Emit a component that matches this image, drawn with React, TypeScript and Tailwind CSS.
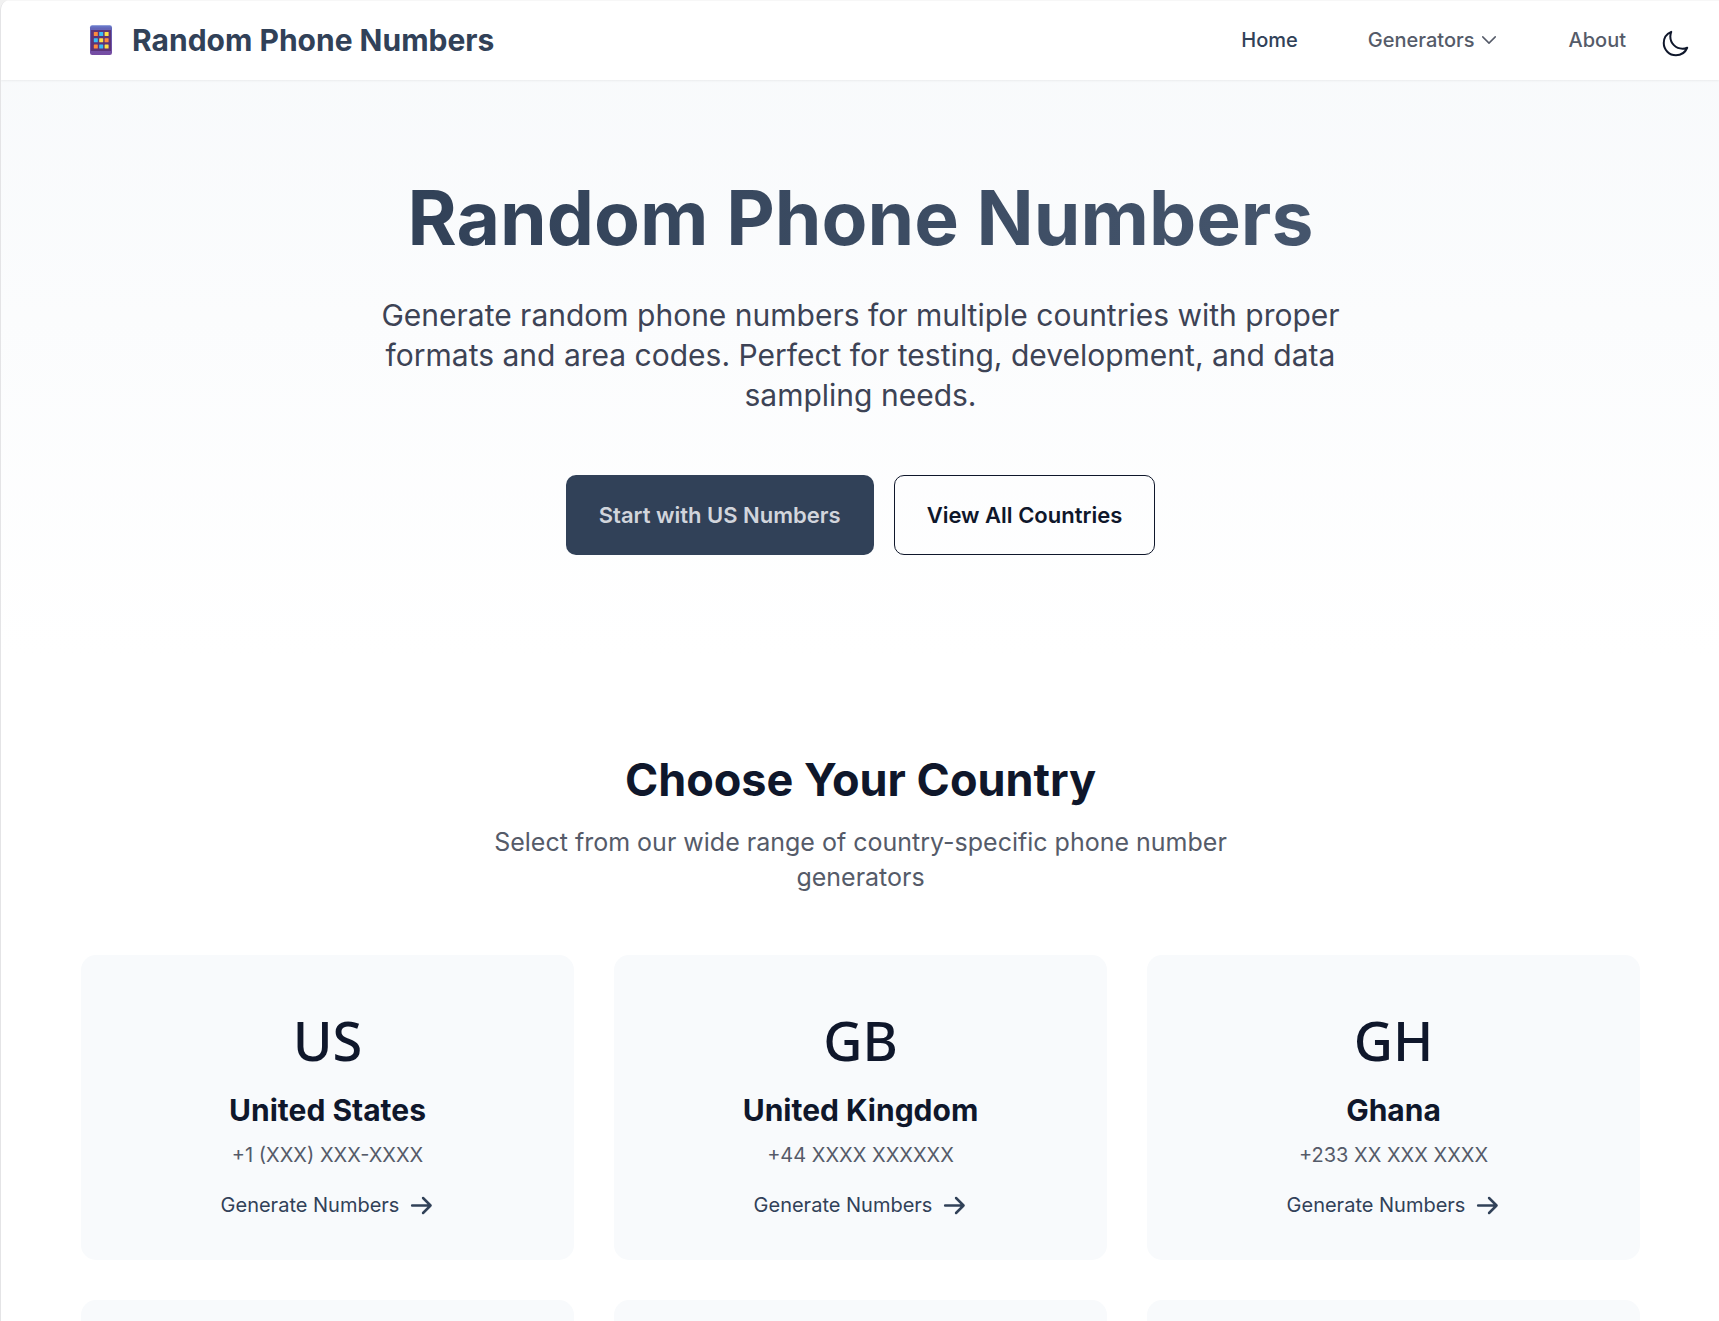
const countries = [
  { code: 'US', name: 'United States', format: '+1 (XXX) XXX-XXXX' },
  { code: 'GB', name: 'United Kingdom', format: '+44 XXXX XXXXXX' },
  { code: 'GH', name: 'Ghana', format: '+233 XX XXX XXXX' },
  { code: 'CA', name: 'Canada', format: '+1 (XXX) XXX-XXXX' },
  { code: 'AU', name: 'Australia', format: '+61 XXX XXX XXX' },
  { code: 'DE', name: 'Germany', format: '+49 XXX XXXXXXX' },
];

const keyColors = [
  ['#ff8a3d', '#38bdf8', '#fde047'],
  ['#38bdf8', '#fde047', '#ff8a3d'],
  ['#ff8a3d', '#38bdf8', '#fde047'],
];

function Logo() {
  return (
    <svg className="h-10 w-10" viewBox="0 0 40 40" aria-hidden="true">
      <defs>
        <linearGradient id="phone-body" x1="0" y1="0" x2="0" y2="1">
          <stop offset="0" stopColor="#6b7fd0" />
          <stop offset="0.1" stopColor="#6366b8" />
          <stop offset="1" stopColor="#764ba2" />
        </linearGradient>
      </defs>
      <rect x="9" y="5.3" width="22" height="29.7" rx="2.2" fill="url(#phone-body)" />
      <rect x="10" y="10" width="20" height="21" fill="#5c3378" />
      {keyColors.map((row, r) =>
        row.map((fill, c) => (
          <rect key={`${r}-${c}`} x={12.8 + c * 5.4} y={12 + r * 6.2} width="4" height="4" rx="0.5" fill={fill} />
        )),
      )}
    </svg>
  );
}

function ChevronDown() {
  return (
    <svg className="h-5 w-5" viewBox="0 0 24 24" fill="none" stroke="currentColor" strokeWidth="1.8" strokeLinecap="round" strokeLinejoin="round" aria-hidden="true">
      <path d="m19.5 8.25-7.5 7.5-7.5-7.5" />
    </svg>
  );
}

function Moon() {
  return (
    <svg className="h-[30px] w-[30px]" viewBox="0 0 24 24" fill="none" stroke="currentColor" strokeWidth="1.6" strokeLinecap="round" strokeLinejoin="round" aria-hidden="true">
      <path d="M21.752 15.002A9.72 9.72 0 0 1 18 15.75c-5.385 0-9.75-4.365-9.75-9.75 0-1.33.266-2.597.748-3.752A9.753 9.753 0 0 0 3 11.25C3 16.635 7.365 21 12.75 21a9.753 9.753 0 0 0 9.002-5.998Z" />
    </svg>
  );
}

function ArrowRight() {
  return (
    <svg className="h-[25px] w-[25px]" viewBox="0 0 24 24" fill="none" stroke="currentColor" strokeWidth="2.4" strokeLinecap="round" strokeLinejoin="round" aria-hidden="true">
      <path d="M13.5 4.8 20.7 12m0 0-7.2 7.2M20.7 12H3" />
    </svg>
  );
}

export default function App() {
  return (
    <div className="min-h-screen bg-[#f1f1f1] font-[Inter,sans-serif] text-slate-900">
      <div className="min-h-screen overflow-hidden rounded-tl-[10px] border-l border-[#e4e4e6] bg-white">
        <header className="relative flex h-20 items-center justify-between bg-white pr-[29px] pl-20 shadow-[inset_0_1px_0_#f7f7f7,0_1px_2px_rgb(0_0_0/0.06)]">
          <a href="#home" className="flex items-center gap-[11px] text-[30px] leading-10 font-bold text-slate-700">
            <Logo />
            Random Phone Numbers
          </a>
          <div className="flex items-center">
            <nav className="flex items-center gap-[70px] text-xl leading-[30px] font-medium text-[#555b69]">
              <a href="#home" className="text-slate-700">Home</a>
              <button type="button" className="flex items-center gap-1">
                Generators
                <ChevronDown />
              </button>
              <a href="#about">About</a>
            </nav>
            <button type="button" aria-label="Switch to dark mode" className="ml-[34px] pt-2">
              <Moon />
            </button>
          </div>
        </header>

        <main>
          <section className="bg-linear-to-b from-slate-50 to-white py-[100px] pr-[79px] pl-20 text-center">
            <h1 className="mx-auto w-fit bg-linear-to-r from-slate-700 to-slate-600 bg-clip-text text-[75px] leading-none font-bold text-transparent">
              Random Phone Numbers
            </h1>
            <p className="mx-auto mt-10 max-w-[960px] text-[30px] leading-10 text-[#3d4355]">
              Generate random phone numbers for multiple countries with proper formats and area codes. Perfect for testing, development, and data sampling needs.
            </p>
            <div className="mt-[60px] flex justify-center gap-5">
              <a href="#us" className="flex h-20 items-center rounded-[10px] bg-slate-700 px-[33px] text-[22px] leading-[35px] font-semibold text-gray-300">
                Start with US Numbers
              </a>
              <a href="#countries" className="flex h-20 items-center rounded-[10px] border border-slate-900 px-8 text-[22px] leading-[35px] font-semibold text-slate-900">
                View All Countries
              </a>
            </div>
          </section>

          <section id="countries" className="pt-[100px] pr-[79px] pb-[100px] pl-20 text-center">
            <h2 className="text-[45px] leading-[50px] font-bold">Choose Your Country</h2>
            <p className="mx-auto mt-5 max-w-[840px] text-[25px] leading-[35px] text-[#555b69]">
              Select from our wide range of country-specific phone number generators
            </p>
            <div className="mt-[60px] grid grid-cols-3 gap-10">
              {countries.map((country) => (
                <a key={country.code} href={`#${country.code.toLowerCase()}`} className="flex flex-col items-center rounded-[15px] bg-slate-50 p-10">
                  <span className="font-['Noto_Sans',sans-serif] text-[54px] leading-[90px] font-medium">{country.code}</span>
                  <h3 className="mt-[5px] text-[30px] leading-10 font-bold">{country.name}</h3>
                  <p className="mt-[10px] text-xl leading-[30px] text-[#555b69]">{country.format}</p>
                  <span className="mt-5 flex items-center gap-[10px] text-xl leading-[30px] text-slate-700">
                    Generate Numbers
                    <ArrowRight />
                  </span>
                </a>
              ))}
            </div>
          </section>
        </main>
      </div>
    </div>
  );
}
